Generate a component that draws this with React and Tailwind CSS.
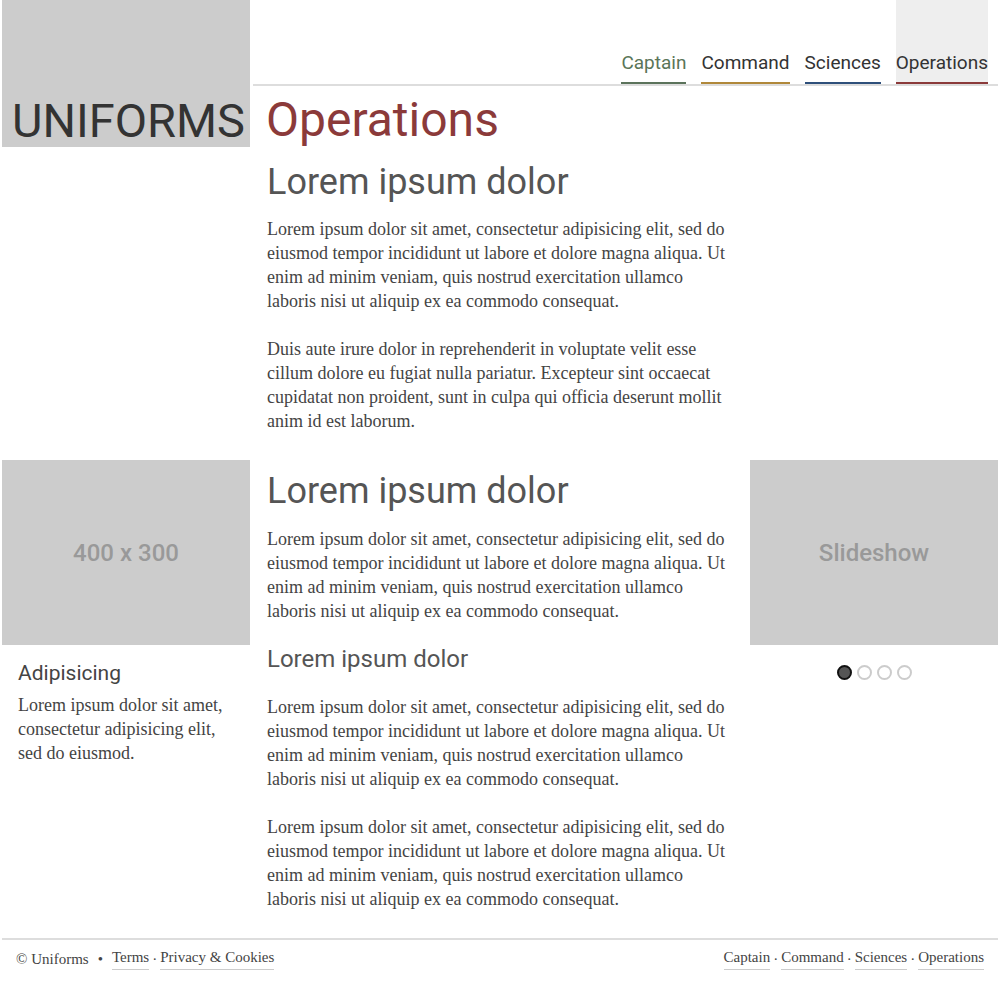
import React from 'react';

const sans = "font-['Roboto','Liberation_Sans',sans-serif]";
const serif = "font-['Liberation_Serif','DejaVu_Serif',serif]";

const lorem = 'Lorem ipsum dolor sit amet, consectetur adipisicing elit, sed do eiusmod tempor incididunt ut labore et dolore magna aliqua. Ut enim ad minim veniam, quis nostrud exercitation ullamco laboris nisi ut aliquip ex ea commodo consequat.';
const duis = 'Duis aute irure dolor in reprehenderit in voluptate velit esse cillum dolore eu fugiat nulla pariatur. Excepteur sint occaecat cupidatat non proident, sunt in culpa qui officia deserunt mollit anim id est laborum.';

const navItems = [
    { label: 'Captain', text: 'text-[#5a7558]', line: 'border-[#5b735b]' },
    { label: 'Command', text: 'text-[#333]', line: 'border-[#b0883a]' },
    { label: 'Sciences', text: 'text-[#333]', line: 'border-[#2e4f7a]' },
    { label: 'Operations', text: 'text-[#333]', line: 'border-[#8b3a3a]', active: true },
];

function Para({ children, className = '' }) {
    return <p className={`${serif} text-[18px] leading-6 text-[#444] ${className}`}>{children}</p>;
}

function FooterLink({ children }) {
    return <a className="border-b border-[#ccc] pb-[2px]">{children}</a>;
}

export default function App() {
    return (
        <div className="w-[1000px] bg-white px-[2px]">
            {/* header */}
            <header className="flex">
                <div className="w-[248px] h-[147px] bg-[#ccc] flex items-end pl-[10px] pb-[3px]">
                    <span className={`${sans} text-[47px] leading-none text-[#333]`}>UNIFORMS</span>
                </div>
                <div className="flex-1 pl-[3px]">
                    <nav className="h-[86px] border-b-2 border-[#ddd] flex items-end justify-end gap-[15px] pr-[10px]">
                        {navItems.map((item) => (
                            <a
                                key={item.label}
                                className={`${sans} h-full flex items-end text-[19px] leading-6 pb-[7px] border-b-2 ${item.text} ${item.line} ${item.active ? 'bg-[#eee]' : ''}`}
                            >
                                {item.label}
                            </a>
                        ))}
                    </nav>
                    <h1 className={`${sans} text-[48px] leading-none text-[#8b3a3a] mt-[10px] pl-[13px]`}>Operations</h1>
                </div>
            </header>

            {/* intro */}
            <section className="grid grid-cols-[248px_466px_248px] gap-x-[17px] mt-[15px]">
                <div />
                <div>
                    <h2 className={`${sans} text-[36px] leading-10 text-[#555]`}>Lorem ipsum dolor</h2>
                    <Para className="mt-[15px]">{lorem}</Para>
                    <Para className="mt-6">{duis}</Para>
                </div>
                <div />
            </section>

            {/* content row */}
            <section className="grid grid-cols-[248px_466px_248px] gap-x-[17px] mt-[27px]">
                <div>
                    <div className="h-[185px] bg-[#ccc] flex items-center justify-center">
                        <span className={`${sans} text-[24px] font-medium text-[#999]`}>400 x 300</span>
                    </div>
                    <div className="pl-4 pr-4">
                        <h4 className={`${sans} text-[21px] leading-7 text-[#444] mt-[14px]`}>Adipisicing</h4>
                        <Para className="mt-[6px]">Lorem ipsum dolor sit amet, consectetur adipisicing elit, sed do eiusmod.</Para>
                    </div>
                </div>
                <div>
                    <h2 className={`${sans} text-[36px] leading-10 text-[#555] mt-[11px]`}>Lorem ipsum dolor</h2>
                    <Para className="mt-4">{lorem}</Para>
                    <h3 className={`${sans} text-[24px] leading-[30px] text-[#555] mt-[21px]`}>Lorem ipsum dolor</h3>
                    <Para className="mt-[21px]">{lorem}</Para>
                    <Para className="mt-6">{lorem}</Para>
                </div>
                <div>
                    <div className="h-[185px] bg-[#ccc] flex items-center justify-center">
                        <span className={`${sans} text-[24px] font-medium text-[#999]`}>Slideshow</span>
                    </div>
                    <div className="flex justify-center gap-[5px] mt-5">
                        <span className="w-[15px] h-[15px] rounded-full bg-[#555] border-2 border-[#111]" />
                        <span className="w-[15px] h-[15px] rounded-full bg-white border-2 border-[#ccc]" />
                        <span className="w-[15px] h-[15px] rounded-full bg-white border-2 border-[#ccc]" />
                        <span className="w-[15px] h-[15px] rounded-full bg-white border-2 border-[#ccc]" />
                    </div>
                </div>
            </section>

            {/* footer */}
            <footer className={`${serif} mt-[27px] border-t-2 border-[#ddd] flex justify-between items-center pt-[7px] pb-[20px] pl-[14px] pr-[14px] text-[15px] leading-5 text-[#444]`}>
                <div className="flex items-center">
                    <span>© Uniforms</span>
                    <span className="mx-[9px]">•</span>
                    <FooterLink>Terms</FooterLink>
                    <span className="mx-[3px]">·</span>
                    <FooterLink>Privacy &amp; Cookies</FooterLink>
                </div>
                <div className="flex items-center">
                    <FooterLink>Captain</FooterLink>
                    <span className="mx-[3px]">·</span>
                    <FooterLink>Command</FooterLink>
                    <span className="mx-[3px]">·</span>
                    <FooterLink>Sciences</FooterLink>
                    <span className="mx-[3px]">·</span>
                    <FooterLink>Operations</FooterLink>
                </div>
            </footer>
        </div>
    );
}
